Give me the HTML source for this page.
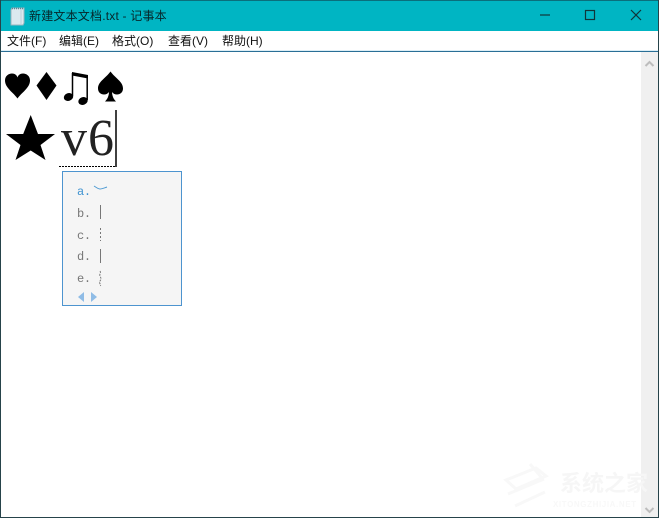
<!DOCTYPE html>
<html><head><meta charset="utf-8">
<style>
html,body{margin:0;padding:0;background:#fff}
#w{position:relative;width:659px;height:518px;overflow:hidden;background:#fff;font-family:"Liberation Sans","Noto Sans CJK SC",sans-serif}
.a{position:absolute;white-space:nowrap}
.m{top:34px;font-size:12px;line-height:14px;color:#111}
.l{left:77px;font-family:"Liberation Mono",monospace;font-size:12px;line-height:14px;color:#777;letter-spacing:-.3px}
svg{position:absolute;left:0;top:0}
</style></head><body>
<div id="w">
<div class="a" style="left:0;top:0;width:659px;height:31px;background:#00b5c3"></div>
<div class="a" style="left:0;top:0;width:659px;height:1px;background:#0a6f7c"></div>
<div class="a" style="left:0;top:51px;width:659px;height:1px;background:#2a6f96"></div>
<div class="a" style="left:0;top:50px;width:659px;height:1px;background:#dceef6"></div>
<div class="a" style="left:641px;top:52px;width:17px;height:465px;background:#f0f0f0"></div>
<div class="a" style="left:29px;top:8px;font-size:12px;line-height:16px;color:#06262a;letter-spacing:.2px">新建文本文档.txt - 记事本</div>
<div class="a m" style="left:7px">文件(F)</div>
<div class="a m" style="left:59px">编辑(E)</div>
<div class="a m" style="left:112px">格式(O)</div>
<div class="a m" style="left:168px">查看(V)</div>
<div class="a m" style="left:222px">帮助(H)</div>
<div class="a" style="left:61px;top:109px;font-family:'Liberation Serif',serif;font-size:52px;line-height:60px;letter-spacing:1px;color:#222">v6</div>
<div class="a" style="left:62px;top:171px;width:118px;height:133px;background:#f5f5f5;border:1px solid #4d94cf"></div>
<div class="a l" style="top:185px;color:#3f93d1">a.</div>
<div class="a l" style="top:207px">b.</div>
<div class="a l" style="top:229px">c.</div>
<div class="a l" style="top:250px">d.</div>
<div class="a l" style="top:272px">e.</div>
<svg width="659" height="518" viewBox="0 0 659 518">
<!-- notepad icon -->
<path d="M11 10l1-2h12v15l-1 2H11z" fill="#dbe9ef" stroke="#9db5bf"/>
<path d="M12 8.500h12" stroke="#5f8594" stroke-width="1.500" stroke-dasharray="1 1"/>
<path d="M21 9v15" stroke="#bcd0d8"/>
<!-- window controls -->
<path d="M540 15h10" stroke="#10353a" stroke-width="1.200"/>
<rect x="585.500" y="10.500" width="9" height="9" fill="none" stroke="#10353a" stroke-width="1.200"/>
<path d="M631 10l10 10M641 10l-10 10" stroke="#10353a" stroke-width="1.200"/>
<!-- scrollbar arrows -->
<path d="M645.500 66l4-4 4 4" fill="none" stroke="#bdbdbd" stroke-width="2"/>
<path d="M645.500 508l4 4 4-4" fill="none" stroke="#bdbdbd" stroke-width="2"/>
<!-- heart -->
<path d="M17.500 98.500C14 93 5 88 5 80.500C5 76 8.500 73.500 12 73.500C14.800 73.500 16.800 75 17.500 77.500C18.200 75 20.200 73.500 23 73.500C26.500 73.500 30 76 30 80.500C30 88 21 93 17.500 98.500Z" fill="#000"/>
<!-- diamond -->
<path d="M46.500 72L36.500 85.500L46.500 100L56.500 85.500Z" fill="#000"/>
<!-- notes -->
<ellipse cx="68.500" cy="97" rx="4.800" ry="3.800" fill="#000" transform="rotate(-20 68.500 97)"/>
<ellipse cx="83" cy="101" rx="4.800" ry="3.800" fill="#000" transform="rotate(-20 83 101)"/>
<path d="M72.500 96V73M87.200 100V76" stroke="#000" stroke-width="1.500"/>
<path d="M72 72L88 75V78.500L72 75.500Z" fill="#000"/>
<!-- spade -->
<path d="M110.500 71.500C106 78 98 81.500 98 88.500C98 92.500 101 94.500 104 94.500C106 94.500 108 93.500 109 92C108.800 96 107.500 99 105 101.500H116C113.500 99 112.200 96 112 92C113 93.500 115 94.500 117 94.500C120 94.500 123 92.500 123 88.500C123 81.500 115 78 110.500 71.500Z" fill="#000"/>
<!-- star -->
<path d="M30.700 115L38 134H55L40.500 145L45.500 160L30.700 150.500L15.500 160L20.500 145L6 134H23.200Z" fill="#000"/>
<!-- caret and underline -->
<path d="M116 110V167" stroke="#000" stroke-width="1.500"/>
<path d="M59 166.500H116" stroke="#000" stroke-dasharray="2 1"/>
<!-- candidates -->
<path d="M94 186c3 2 5 3 6 3c2 0 4-1 7-2" fill="none" stroke="#4f9bd3"/>
<path d="M100.500 205V219" stroke="#777"/>
<path d="M100.500 228V241" stroke="#777" stroke-dasharray="2 2"/>
<path d="M100.500 249V263" stroke="#777"/>
<path d="M100 271c1.500 2-1 3 0 5s1.500 3 0 5s1 3 .5 5" fill="none" stroke="#777" stroke-dasharray="2 1"/>
<path d="M84 292v10l-6-5z" fill="#8fbce6"/>
<path d="M91 292v10l6-5z" fill="#8fbce6"/>
<!-- watermark -->
<g fill="none" stroke="#f8f8f8" stroke-width="3">
<path d="M506 480l30-12 10 8-30 13zM508 494l36-15M515 506l30-14"/>
<path d="M530 464l12 14"/>
</g>
</svg>
<div class="a" style="left:560px;top:471px;font-size:22px;line-height:26px;color:#f6f6f6;font-weight:bold">系统之家</div>
<div class="a" style="left:553px;top:500px;font-size:8px;line-height:10px;color:#f8f8f8;letter-spacing:.6px;font-weight:bold">XITONGZHIJIA.NET</div>
<div class="a" style="left:0;top:0;width:1px;height:518px;background:#26434a"></div>
<div class="a" style="left:658px;top:0;width:1px;height:518px;background:#26434a"></div>
<div class="a" style="left:0;top:517px;width:659px;height:1px;background:#26434a"></div>
</div>
</body></html>
